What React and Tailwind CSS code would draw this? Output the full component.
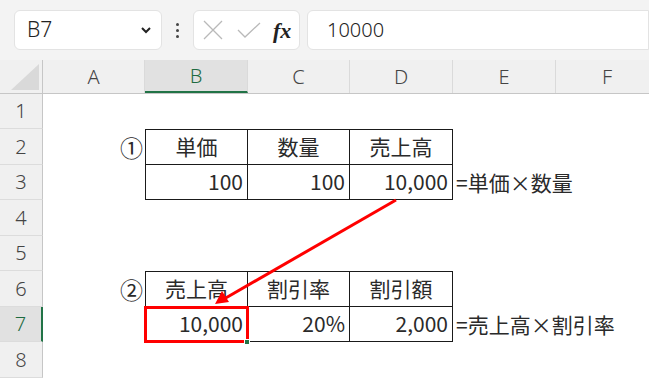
import React from 'react';

const cols = ['A', 'B', 'C', 'D', 'E', 'F'];
const colW = ['w-[102px]', 'w-[103px]', 'w-[102px]', 'w-[103px]', 'w-[103px]', 'w-[103px]'];
const rowH = ['h-[35px]', 'h-[36px]', 'h-[35px]', 'h-[36px]', 'h-[35px]', 'h-[36px]', 'h-[35px]', 'h-[36px]'];

// cell contents: [row][col] -> { text, align, table, top }
const cells = {
  2: { A: { text: '①', align: 'right', big: true }, B: { text: '単価', align: 'center', table: true, top: true }, C: { text: '数量', align: 'center', table: true, top: true }, D: { text: '売上高', align: 'center', table: true, top: true } },
  3: { B: { text: '100', align: 'right', table: true }, C: { text: '100', align: 'right', table: true }, D: { text: '10,000', align: 'right', table: true }, E: { text: '=単価×数量', align: 'left' } },
  6: { A: { text: '②', align: 'right', big: true }, B: { text: '売上高', align: 'center', table: true, top: true }, C: { text: '割引率', align: 'center', table: true, top: true }, D: { text: '割引額', align: 'center', table: true, top: true } },
  7: { B: { text: '10,000', align: 'right', table: true }, C: { text: '20%', align: 'right', table: true }, D: { text: '2,000', align: 'right', table: true }, E: { text: '=売上高×割引率', align: 'left' } },
};

const Cell = ({ col, idx, data }) => {
  const align = data?.align === 'right' ? 'justify-end pr-1' : data?.align === 'center' ? 'justify-center' : 'justify-start pl-[3px]';
  const border = data?.table
    ? `border-r border-b border-[#1a1a1a] ${col === 'B' ? 'border-l' : ''} ${data.top ? 'border-t' : ''}`
    : '';
  return (
    <div className={`${colW[idx]} shrink-0 h-full flex items-center whitespace-nowrap ${align} ${border} ${data?.big ? 'text-[23px] pr-[2px]' : ''}`}>
      {data?.text}
    </div>
  );
};

export default function App() {
  return (
    <div className="relative w-[649px] h-[379px] overflow-hidden bg-white text-[#262626]" style={{ fontFamily: '"Noto Sans", "Noto Sans CJK JP", sans-serif' }}>
      {/* formula bar */}
      <div className="h-[60px] bg-[#f3f3f3] flex items-center pl-[14px] gap-0">
        <div className="w-[148px] h-[40px] bg-white rounded-md border border-[#e3e3e3] flex items-center justify-between pl-3 pr-2 text-[21px] font-light text-[#222]">
          <span>B7</span>
          <svg width="14" height="14" viewBox="0 0 14 14"><path d="M3 5 L7 9 L11 5" fill="none" stroke="#222" strokeWidth="2" /></svg>
        </div>
        <div className="w-[31px] flex flex-col items-center gap-[3px]">
          <span className="w-[3px] h-[3px] rounded-full bg-[#444]" />
          <span className="w-[3px] h-[3px] rounded-full bg-[#444]" />
          <span className="w-[3px] h-[3px] rounded-full bg-[#444]" />
        </div>
        <div className="w-[107px] h-[40px] bg-white rounded-md border border-[#e3e3e3] flex items-center pl-[7px] gap-[11px]">
          <svg width="24" height="24" viewBox="0 0 24 24"><path d="M3 3 L21 21 M21 3 L3 21" stroke="#b9b9b9" strokeWidth="1.3" /></svg>
          <svg width="26" height="22" viewBox="0 0 26 22"><path d="M2 11 L9 18 L24 4" fill="none" stroke="#b9b9b9" strokeWidth="1.3" /></svg>
          <span className="text-[22px] italic text-[#222] font-semibold" style={{ fontFamily: '"Liberation Serif", serif' }}>fx</span>
        </div>
        <div className="ml-[7px] flex-1 h-[40px] bg-white rounded-l-md border border-[#e3e3e3] flex items-center pl-[19px] text-[20px] font-light text-[#222]">
          10000
        </div>
      </div>

      {/* column headers */}
      <div className="flex h-[34px] bg-[#f0f0f0] border-b border-[#c6c6c6] text-[20px] font-light text-[#444]">
        <div className="w-[43px] shrink-0 h-full border-r border-[#c6c6c6] flex items-end justify-end pr-[3px] pb-[3px]">
          <svg width="28" height="26" viewBox="0 0 28 26"><path d="M28 0 L28 26 L0 26 Z" fill="#d9d9d9" /></svg>
        </div>
        {cols.map((c, i) => (
          <div
            key={c}
            className={`${colW[i]} shrink-0 h-full flex items-center justify-center border-r border-[#dadada] ${c === 'B' ? 'bg-[#e1e1e1] text-[#1e6b41] border-b-2 border-b-[#217346]' : ''}`}
          >
            {c}
          </div>
        ))}
      </div>

      {/* rows */}
      <div className="flex flex-col text-[21px] text-[#2a2a2a]" style={{ fontFamily: '"Noto Sans CJK JP", "Noto Sans", sans-serif' }}>
        {rowH.map((h, r) => {
          const n = r + 1;
          const sel = n === 7;
          return (
            <div key={n} className={`flex ${h}`}>
              <div
                className={`w-[43px] shrink-0 h-full flex items-center justify-center border-b border-[#dcdcdc] text-[20px] font-light ${sel ? 'bg-[#e1e1e1] text-[#1e6b41] border-r-2 border-r-[#217346]' : 'bg-[#f0f0f0] text-[#444] border-r border-r-[#c6c6c6]'}`}
                style={{ fontFamily: '"Noto Sans", sans-serif' }}
              >
                {n}
              </div>
              {cols.map((c, i) => (
                <Cell key={c} col={c} idx={i} data={cells[n]?.[c]} />
              ))}
            </div>
          );
        })}
      </div>

      {/* selection box on B7 */}
      <div className="absolute left-[144px] top-[306px] w-[105px] h-[37px] border-[3px] border-[#ff0000]" />
      <div className="absolute left-[244px] top-[339px] w-[6px] h-[6px] bg-[#217346] border border-white" />

      {/* arrow */}
      <svg className="absolute left-0 top-0 pointer-events-none" width="649" height="379">
        <line x1="396" y1="200" x2="224" y2="299" stroke="#ff0000" strokeWidth="3" />
        <polygon points="215,304 222,291 229,302" fill="#ff0000" />
      </svg>
    </div>
  );
}
